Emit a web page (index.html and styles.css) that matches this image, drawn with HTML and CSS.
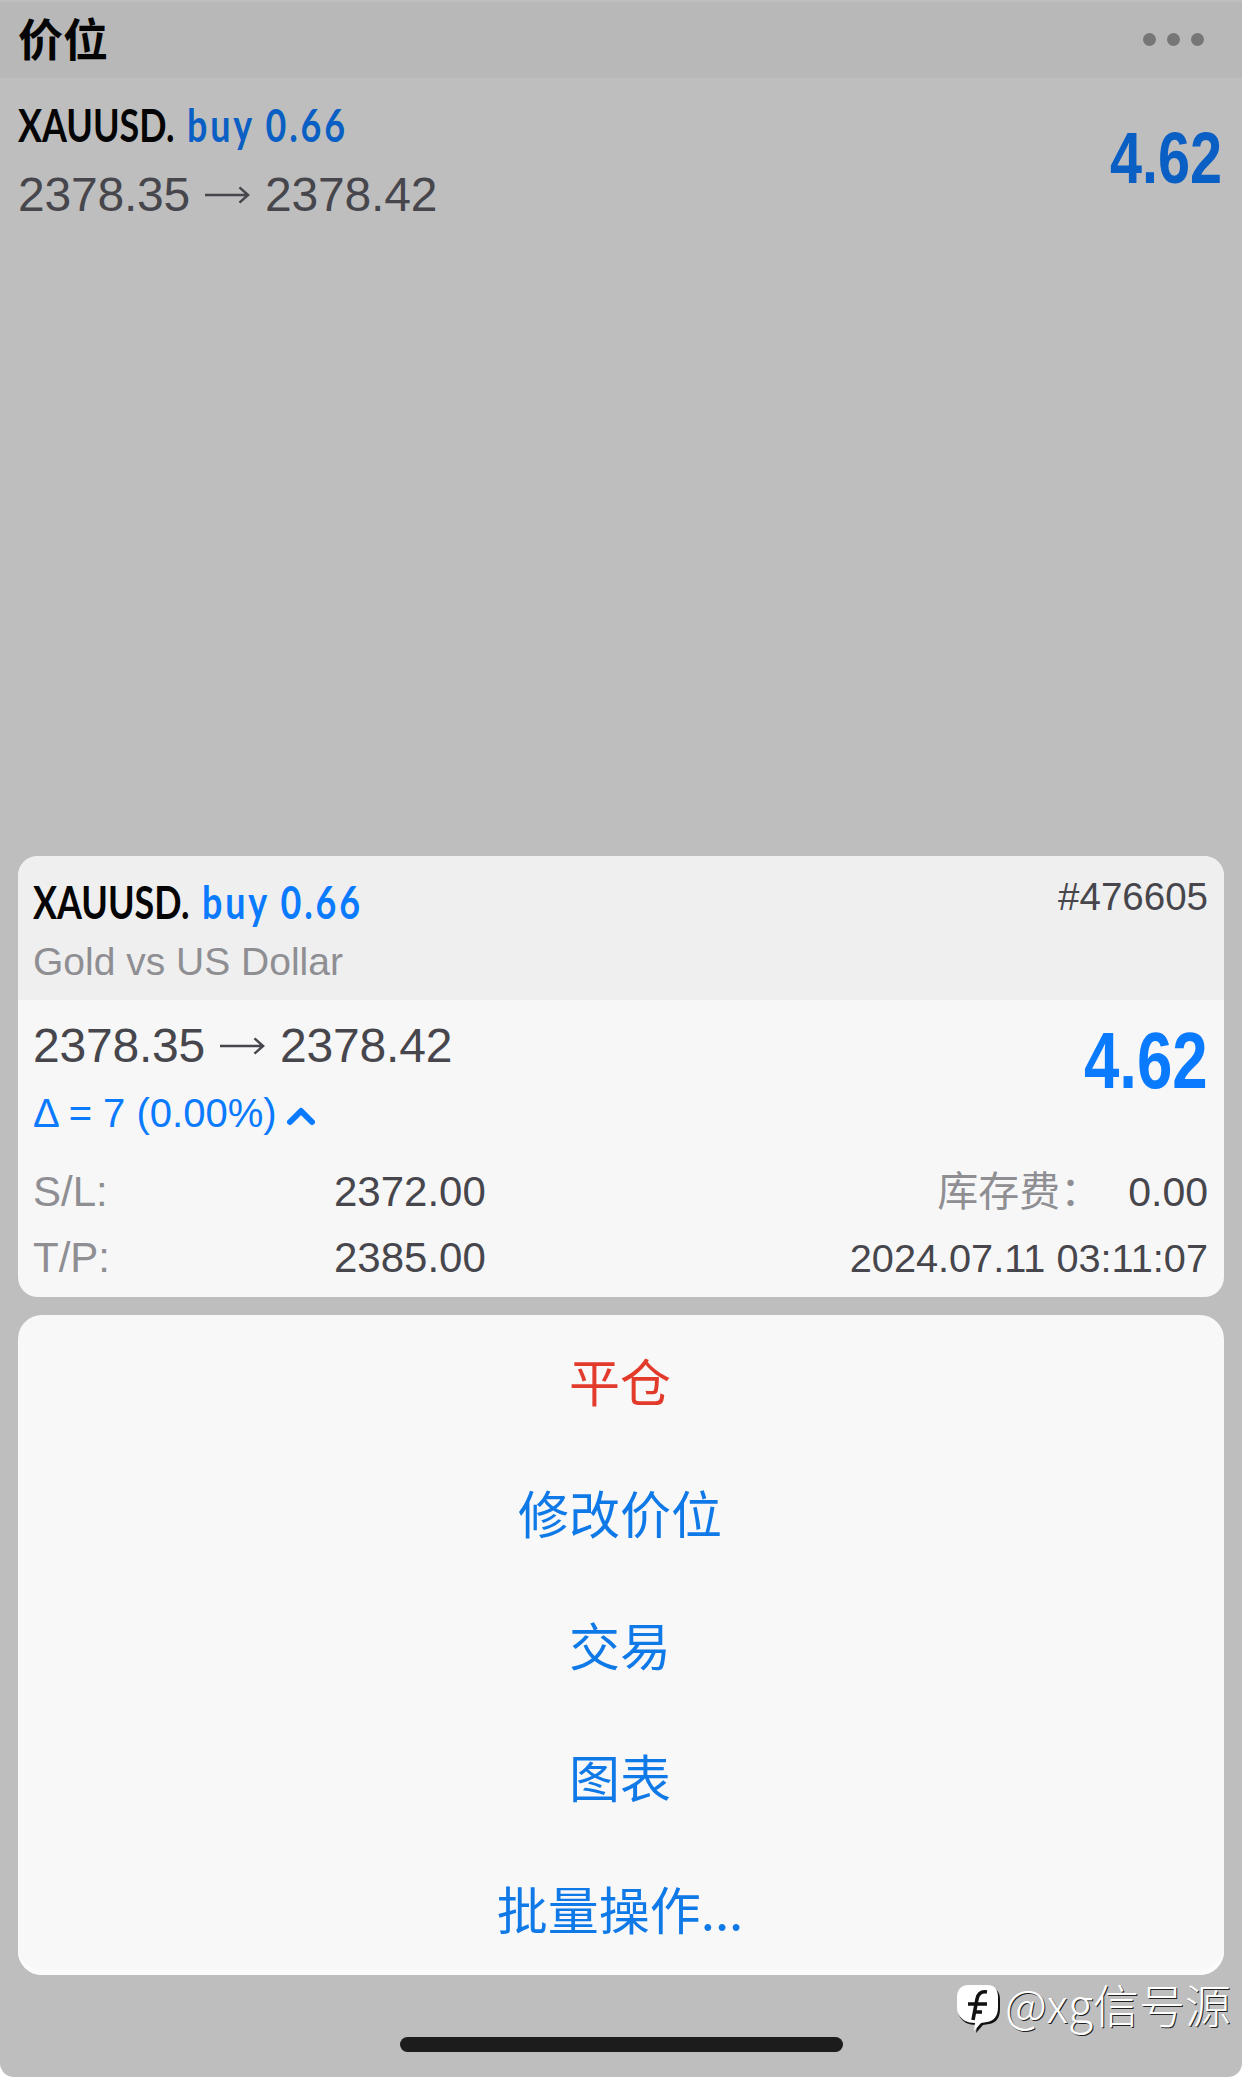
FILE: index.html
```html
<!DOCTYPE html>
<html lang="zh">
<head>
    <meta charset="UTF-8">
    <title>价位</title>
    <link rel="stylesheet" href="styles.css">
</head>
<body>
    <div class="screen">
        <!--顶部标题栏-->
        <div class="topbar">
            <div class="title">价位</div>
            <div class="dots"><i></i><i></i><i></i></div>
        </div>
        <div class="position">
            <div>
                <div class="symbol">XAUUSD. <span class="side dim-blue">buy 0.66</span></div>
                <div class="prices">
                    <span>2378.35</span>
                    <svg class="arrow" viewBox="0 0 47 20"><path d="M0 10H45M36 2l9 8-9 8" fill="none" stroke="#46464c" stroke-width="2.6"/></svg>
                    <span>2378.42</span>
                </div>
            </div>
            <div class="profit dim-blue">4.62</div>
        </div>

        <!--详情卡片-->
        <div class="sheet">
            <div class="card">
                <div class="card-head">
                    <div>
                        <div class="symbol">XAUUSD. <span class="side blue">buy 0.66</span></div>
                        <div class="fullname">Gold vs US Dollar</div>
                    </div>
                    <div class="ticket">#476605</div>
                </div>
                <div class="card-body">
                    <div class="price-row">
                        <div>
                            <div class="prices">
                                <span>2378.35</span>
                                <svg class="arrow" viewBox="0 0 47 20"><path d="M0 10H45M36 2l9 8-9 8" fill="none" stroke="#46464c" stroke-width="2.6"/></svg>
                                <span>2378.42</span>
                            </div>
                            <div class="delta">Δ = 7 (0.00%)
                                <svg class="chevron" viewBox="0 0 28 20"><path d="M3 16 14 5l11 11" fill="none" stroke="#0a7aff" stroke-width="6" stroke-linecap="round" stroke-linejoin="round"/></svg>
                            </div>
                        </div>
                        <div class="profit blue">4.62</div>
                    </div>
                    <div class="stats">
                        <span class="label">S/L:</span><span class="val">2372.00</span>
                        <span class="right swap-cell"><span class="label swap">库存费：</span><span class="val zero">0.00</span></span>
                        <span class="label">T/P:</span><span class="val">2385.00</span>
                        <span class="right val date">2024.07.11 03:11:07</span>
                    </div>
                </div>
            </div>

            <!--操作菜单-->
            <div class="menu">
                <div class="item red">平仓</div>
                <div class="item">修改价位</div>
                <div class="item">交易</div>
                <div class="item">图表</div>
                <div class="item">批量操作...</div>
            </div>
        </div>

        <div class="home"></div>

        <div class="watermark">
            <svg class="mark" viewBox="0 0 44 50">
                <path d="M12 3h20c7 0 11 5 11 12v10c0 9-4 14-11 15l-6 1-7 8 1-8c-9 0-14-3-17-8-2-3-2-6-2-10V15C1 8 5 3 12 3z" fill="#111" transform="translate(1 1)"/>
                <path d="M12 2h20c7 0 10 5 10 12v10c0 9-4 14-11 15l-6 1-7 8 1-8c-8 0-13-3-16-8-2-3-2-6-2-10V14C1 7 5 2 12 2z" fill="#fff"/>
                <path d="M31 9c-6-1-9 2-10 7l-4 21M12 21h19M17 29h9" fill="none" stroke="#111" stroke-width="3.6"/>
            </svg>
            <span class="mark-text">@xg信号源</span>
        </div>
    </div>
</body>
</html>
```

FILE: styles.css
```css
*{
    margin: 0;
    padding: 0;
    box-sizing: border-box;
}
body{
    width: 1242px;
    height: 2077px;
    overflow: hidden;
    background-color: #fff;
    font-family: "Liberation Sans", "Noto Sans CJK SC", sans-serif;
}
.screen{
    position: relative;
    height: 2077px;
    display: flex;
    flex-direction: column;
    background-color: #bebebe;
    border-radius: 0 0 14px 14px;
}
.topbar{
    height: 78px;
    background-color: #b8b8b8;
    border-top: 2px solid #bebebe;
    display: flex;
    justify-content: space-between;
    align-items: center;
    padding: 0 38px 5px 18px;
}
.title{
    font-size: 45px;
    font-weight: bold;
    color: #050505;
    font-family: "Noto Sans CJK SC", sans-serif;
}
.dots{
    display: flex;
    gap: 11px;
    margin-top: 4px;
}
.dots i{
    width: 13px;
    height: 13px;
    border-radius: 50%;
    background-color: #767676;
}
.position{
    display: flex;
    justify-content: space-between;
    align-items: center;
    padding: 19px 20px 0 18px;
}
.position .prices{
    margin-top: 14px;
}
.position .profit{
    margin-bottom: 4px;
}
.symbol{
    font-family: "Lato", sans-serif;
    font-size: 46px;
    line-height: 56px;
    font-weight: bold;
    color: #050505;
    transform: scaleX(0.78);
    transform-origin: left;
    white-space: nowrap;
}
.side{
    letter-spacing: 3.6px;
    margin-left: 5px;
}
.dim-blue{
    color: #0a5fc4;
}
.blue{
    color: #0a7aff;
}
.prices{
    display: flex;
    align-items: center;
    font-size: 48px;
    line-height: 56px;
    letter-spacing: -0.2px;
    margin-top: 13px;
    color: #46464c;
}
.arrow{
    width: 45px;
    height: 20px;
    margin: 0 15px 0 15px;
}
.profit{
    font-size: 72px;
    font-weight: bold;
    transform: scaleX(0.8);
    transform-origin: right;
}
.sheet{
    margin: 633px 18px 0;
    display: flex;
    flex-direction: column;
    gap: 18px;
}
.card{
    height: 441px;
    border-radius: 20px;
    overflow: hidden;
    background-color: #f7f7f7;
}
.card-head{
    height: 144px;
    background-color: #efefef;
    display: flex;
    justify-content: space-between;
    padding: 18px 16px 0 15px;
}
.fullname{
    font-size: 39px;
    line-height: 46px;
    margin-top: 9px;
    color: #8e8e93;
}
.ticket{
    font-size: 38.5px;
    line-height: 46px;
    color: #46464c;
}
.card-body{
    padding: 6px 16px 0 15px;
}
.price-row{
    display: flex;
    justify-content: space-between;
    height: 116px;
}
.card-body .prices{
    margin-top: 12px;
}
.card-body .profit{
    font-size: 80px;
    line-height: 84px;
    margin-top: 13px;
    transform: scaleX(0.795);
}
.delta{
    font-size: 40px;
    line-height: 46px;
    margin-top: 16px;
    color: #0a7aff;
    display: flex;
    align-items: center;
    gap: 10px;
}
.chevron{
    width: 28px;
    height: 20px;
    margin-top: 6px;
}
.stats{
    display: grid;
    grid-template-columns: 301px 1fr auto;
    grid-auto-rows: 66px;
    align-items: center;
    margin-top: 37px;
    font-size: 42px;
}
.label{
    color: #8e8e93;
}
.val{
    color: #46464c;
}
.right{
    text-align: right;
}
.swap-cell{
    display: flex;
    justify-content: flex-end;
    align-items: center;
    line-height: 46px;
}
.swap{
    font-size: 41px;
    margin-right: 27px;
}
.zero{
    font-size: 41px;
}
.date{
    font-size: 39.7px;
}
.menu{
    height: 660px;
    border-radius: 24px;
    background-color: #f8f8f8;
    box-shadow: inset 0 -5px 0 #fbfbfb;
    display: flex;
    flex-direction: column;
}
.item{
    flex: 1;
    display: flex;
    align-items: center;
    justify-content: center;
    padding: 0 2px 2px 0;
    font-size: 51px;
    color: #1079e8;
    font-family: "Noto Sans CJK SC", sans-serif;
}
.item.red{
    color: #e23b2c;
}
.home{
    position: absolute;
    left: 400px;
    top: 2037px;
    width: 443px;
    height: 15px;
    border-radius: 8px;
    background-color: #1c1c1c;
}
/*水印*/
.watermark{
    position: absolute;
    left: 956px;
    top: 1970px;
    display: flex;
    align-items: center;
    gap: 5px;
}
.mark{
    width: 44px;
    height: 50px;
    margin-top: 10px;
}
.mark-text{
    font-size: 46px;
    font-family: "Noto Sans CJK SC", sans-serif;
    font-weight: 300;
    color: #fff;
    text-shadow: 1px 1px 0 #222;
    white-space: nowrap;
}
```
